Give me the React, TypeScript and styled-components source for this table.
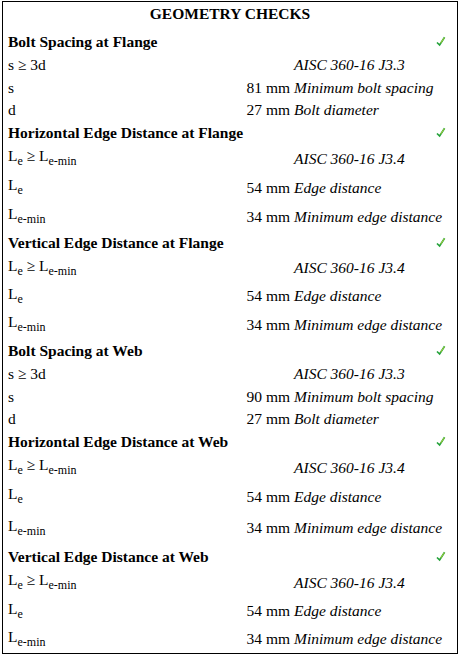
import styled, { createGlobalStyle } from "styled-components";

type Row = { sym: "s" | "d" | "Le" | "Lemin"; value: string; desc: string };

interface Section {
  title: string;
  kind: "spacing" | "edge";
  code: string;
  // heights of the header, rule and two data rows
  heights: number[];
  rows: Row[];
}

const sections: Section[] = [
  {
    title: "Bolt Spacing at Flange",
    kind: "spacing",
    code: "AISC 360-16 J3.3",
    heights: [23, 23, 23, 22],
    rows: [
      { sym: "s", value: "81 mm", desc: "Minimum bolt spacing" },
      { sym: "d", value: "27 mm", desc: "Bolt diameter" },
    ],
  },
  {
    title: "Horizontal Edge Distance at Flange",
    kind: "edge",
    code: "AISC 360-16 J3.4",
    heights: [23, 29, 29, 29],
    rows: [
      { sym: "Le", value: "54 mm", desc: "Edge distance" },
      { sym: "Lemin", value: "34 mm", desc: "Minimum edge distance" },
    ],
  },
  {
    title: "Vertical Edge Distance at Flange",
    kind: "edge",
    code: "AISC 360-16 J3.4",
    heights: [23, 28, 28, 29],
    rows: [
      { sym: "Le", value: "54 mm", desc: "Edge distance" },
      { sym: "Lemin", value: "34 mm", desc: "Minimum edge distance" },
    ],
  },
  {
    title: "Bolt Spacing at Web",
    kind: "spacing",
    code: "AISC 360-16 J3.3",
    heights: [23, 23, 23, 22],
    rows: [
      { sym: "s", value: "90 mm", desc: "Minimum bolt spacing" },
      { sym: "d", value: "27 mm", desc: "Bolt diameter" },
    ],
  },
  {
    title: "Horizontal Edge Distance at Web",
    kind: "edge",
    code: "AISC 360-16 J3.4",
    heights: [23, 29, 29, 34],
    rows: [
      { sym: "Le", value: "54 mm", desc: "Edge distance" },
      { sym: "Lemin", value: "34 mm", desc: "Minimum edge distance" },
    ],
  },
  {
    title: "Vertical Edge Distance at Web",
    kind: "edge",
    code: "AISC 360-16 J3.4",
    heights: [23, 29, 28, 28],
    rows: [
      { sym: "Le", value: "54 mm", desc: "Edge distance" },
      { sym: "Lemin", value: "34 mm", desc: "Minimum edge distance" },
    ],
  },
];

const Symbol = ({ sym }: { sym: Row["sym"] }) => {
  if (sym === "Le")
    return (
      <>
        L<Sub>e</Sub>
      </>
    );
  if (sym === "Lemin")
    return (
      <>
        L<Sub>e-min</Sub>
      </>
    );
  return <>{sym}</>;
};

const Check = () => (
  <CheckIcon width="10" height="11" viewBox="0 0 10 11">
    <path d="M1 6.5 L3.6 9 L8.6 1.2" fill="none" stroke="#23a23a" strokeWidth="1.7" />
    <path d="M4.6 7.2 L8.4 1.6" fill="none" stroke="#e2e234" strokeWidth="0.7" />
  </CheckIcon>
);

const App = () => {
  return (
    <>
      <GlobalStyle />
      <Table>
        <Title>GEOMETRY CHECKS</Title>
        {sections.map((sec) => {
          const [hHead, hRule, hA, hB] = sec.heights;
          return (
            <div key={sec.title}>
              <GridRow $h={hHead}>
                <Heading>{sec.title}</Heading>
                <CheckCell>
                  <Check />
                </CheckCell>
              </GridRow>
              <GridRow $h={hRule}>
                <Label>
                  {sec.kind === "edge" ? (
                    <>
                      L<Sub>e</Sub> ≥ L<Sub>e-min</Sub>
                    </>
                  ) : (
                    "s ≥ 3d"
                  )}
                </Label>
                <span />
                <Desc>{sec.code}</Desc>
              </GridRow>
              {sec.rows.map((r, i) => (
                <GridRow key={r.sym} $h={i === 0 ? hA : hB}>
                  <Label>
                    <Symbol sym={r.sym} />
                  </Label>
                  <Value>{r.value}</Value>
                  <Desc>{r.desc}</Desc>
                </GridRow>
              ))}
            </div>
          );
        })}
      </Table>
    </>
  );
};

export default App;

const GlobalStyle = createGlobalStyle`
  body {
    margin: 0;
    background: #fff;
    font-family: "Liberation Serif", "Times New Roman", serif;
    color: #000;
  }
`;

const Table = styled.div`
  box-sizing: border-box;
  width: 456px;
  margin: 1px 0 0 2px;
  border: 1px solid #000;
  font-size: 15.5px;
`;

const Title = styled.div`
  height: 28px;
  padding-bottom: 5px;
  box-sizing: border-box;
  display: flex;
  align-items: center;
  justify-content: center;
  font-weight: bold;
`;

const GridRow = styled.div<{ $h: number }>`
  display: grid;
  grid-template-columns: 1fr 56px 160px;
  column-gap: 4px;
  align-items: center;
  height: ${(p) => p.$h}px;
  padding: 0 3px 0 5px;
  white-space: nowrap;
`;

const Heading = styled.div`
  grid-column: 1 / 3;
  font-weight: bold;
`;

const CheckCell = styled.div`
  display: flex;
  justify-content: flex-end;
  padding-right: 8px;
`;

const CheckIcon = styled.svg`
  display: block;
`;

const Label = styled.div``;

const Value = styled.div`
  text-align: right;
`;

const Desc = styled.div`
  font-style: italic;
`;

const Sub = styled.sub`
  font-size: 12px;
`;
